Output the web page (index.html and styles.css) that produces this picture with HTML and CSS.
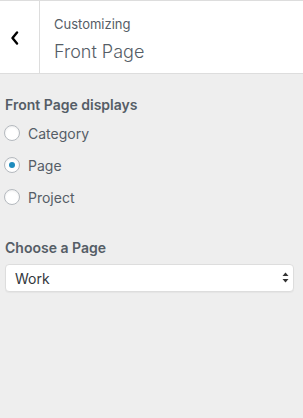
FILE: index.html
```html
<!DOCTYPE html>
<html lang="en">
<head>
  <meta charset="UTF-8" />
  <title>Customizing Front Page</title>
  <link rel="stylesheet" href="styles.css">
</head>
<body>

  <!-- Panel header -->
  <div class="panel-header">
    <button class="back-btn" aria-label="Back">
      <svg width="10" height="14" viewBox="0 0 10 14">
        <path d="M7 1.5 L2.5 7 L7 12.5" fill="none" stroke="#000" stroke-width="2.4" stroke-linecap="round" stroke-linejoin="round"/>
      </svg>
    </button>
    <div class="panel-title">
      <span class="panel-action">Customizing</span>
      <h3>Front Page</h3>
    </div>
  </div>

  <!-- Controls -->
  <div class="panel-body">
    <div class="control">
      <span class="control-title">Front Page displays</span>
      <label class="radio-row"><input type="radio" name="show_on_front" /> Category</label>
      <label class="radio-row"><input type="radio" name="show_on_front" checked /> Page</label>
      <label class="radio-row"><input type="radio" name="show_on_front" /> Project</label>
    </div>

    <div class="control">
      <span class="control-title select-title">Choose a Page</span>
      <div class="select-wrap">
        <select>
          <option>Work</option>
          <option>About</option>
          <option>Contact</option>
        </select>
        <svg class="select-arrows" width="7" height="11" viewBox="0 0 7 11">
          <path d="M3.5 0.5 L6.5 4 L0.5 4 Z" fill="#333"/>
          <path d="M3.5 10.5 L6.5 7 L0.5 7 Z" fill="#333"/>
        </svg>
      </div>
    </div>
  </div>

</body>
</html>
```

FILE: styles.css
```css
* { box-sizing: border-box; }
body {
  margin: 0;
  background: #eee;
  font-family: Inter, "Open Sans", sans-serif;
  color: #555d66;
  min-height: 100vh;
}
.panel-header {
  display: flex;
  height: 74px;
  background: #fff;
  border-top: 1px solid #ddd;
  border-bottom: 1px solid #ddd;
}
.back-btn {
  width: 40px;
  padding: 0 0 0 10px;
  border: none;
  border-right: 1px solid #ddd;
  background: #fff;
  display: flex;
  align-items: center;
  cursor: pointer;
}
.back-btn svg { margin-top: 1px; }
.panel-title {
  padding: 13px 0 0 14px;
}
.panel-action {
  display: block;
  font-size: 13px;
  line-height: 20px;
  color: #555d66;
}
.panel-title h3 {
  margin: 6px 0 0;
  font-size: 18px;
  font-weight: 300;
  line-height: 24px;
  color: #555d66;
}
.panel-body {
  padding: 21px 9px 0 5px;
}
.control { margin-bottom: 25px; }
.control-title {
  display: block;
  font-size: 14px;
  font-weight: 600;
  line-height: 20px;
  margin-bottom: 2px;
}
.select-title { margin-bottom: 6px; }
.radio-row {
  display: flex;
  align-items: center;
  height: 32px;
  font-size: 14px;
  color: #555d66;
  margin-left: -1px;
}
.radio-row input {
  appearance: none;
  width: 16px;
  height: 16px;
  margin: 0 8px 0 0;
  border: 1px solid #b4b9be;
  border-radius: 50%;
  background: #fff;
  box-shadow: inset 0 1px 2px rgba(0, 0, 0, 0.07);
  display: flex;
  align-items: center;
  justify-content: center;
}
.radio-row input:checked::before {
  content: "";
  width: 6px;
  height: 6px;
  border-radius: 50%;
  background: #1e8cbe;
}
.select-wrap { position: relative; }
.select-wrap select {
  appearance: none;
  width: 100%;
  height: 28px;
  padding: 0 24px 0 9px;
  border: 1px solid #ddd;
  border-radius: 4px;
  background: #fff;
  box-shadow: 0 1px 1px rgba(0, 0, 0, 0.04);
  font-family: Inter, "Open Sans", sans-serif;
  font-size: 14px;
  color: #32373c;
}
.select-arrows {
  position: absolute;
  right: 5px;
  top: 8px;
  pointer-events: none;
}
```
